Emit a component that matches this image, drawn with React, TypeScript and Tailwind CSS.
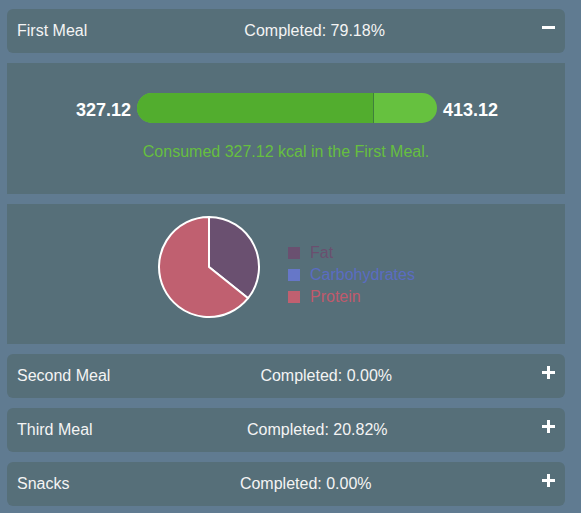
import React from "react";

const FONT = { fontFamily: '"Liberation Sans", Arial, sans-serif' };

const MEALS = [
  { name: "Second Meal", pct: "0.00" },
  { name: "Third Meal", pct: "20.82" },
  { name: "Snacks", pct: "0.00" },
];

function ToggleIcon({ open }: { open: boolean }) {
  return (
    <svg width="13" height="13" viewBox="0 0 13 13" className="-mt-2 shrink-0">
      <rect x="0" y="5" width="13" height="3" fill="#ffffff" />
      {!open && <rect x="5" y="0" width="3" height="13" fill="#ffffff" />}
    </svg>
  );
}

function MealHeader({ name, pct, open }: { name: string; pct: string; open: boolean }) {
  return (
    <div className="h-[44px] px-[10px] flex items-center justify-between rounded-md bg-[#566f79] text-[16px] text-[#f4f4f4]">
      <span>{name}</span>
      <span>Completed: {pct}%</span>
      <ToggleIcon open={open} />
    </div>
  );
}

// slice path for the pie, angles in degrees clockwise from 12 o'clock
function slice(cx: number, cy: number, r: number, a0: number, a1: number) {
  const p = (a: number) => {
    const rad = ((a - 90) * Math.PI) / 180;
    return [cx + r * Math.cos(rad), cy + r * Math.sin(rad)];
  };
  const [x0, y0] = p(a0);
  const [x1, y1] = p(a1);
  const large = a1 - a0 > 180 ? 1 : 0;
  return `M${cx},${cy} L${x0},${y0} A${r},${r} 0 ${large} 1 ${x1},${y1} Z`;
}

function Pie() {
  const fat = 128.6;
  return (
    <svg width="104" height="104" viewBox="0 0 104 104" className="shrink-0">
      <path d={slice(52, 52, 50, 0, fat)} fill="#6a5070" stroke="#ffffff" strokeWidth="2" strokeLinejoin="round" />
      <path d={slice(52, 52, 50, fat, 360)} fill="#c06070" stroke="#ffffff" strokeWidth="2" strokeLinejoin="round" />
    </svg>
  );
}

const LEGEND = [
  { label: "Fat", box: "bg-[#6a5070]", text: "text-[#6a4f6f]" },
  { label: "Carbohydrates", box: "bg-[#6677c8]", text: "text-[#5a6cc2]" },
  { label: "Protein", box: "bg-[#c06070]", text: "text-[#c05a6c]" },
];

export default function App() {
  return (
    <div className="min-h-screen bg-[#607b91] pt-[9px] pb-[8px] pl-[7px] pr-[16px]" style={FONT}>
      <div className="flex flex-col gap-[10px]">
        <MealHeader name="First Meal" pct="79.18" open />

        {/* Calories bar */}
        <div className="h-[131px] bg-[#566f79] pt-[30px] flex flex-col items-center">
          <div className="flex items-center gap-[6px] h-[30px] ml-[2px]">
            <span className="text-[18px] font-bold text-white mt-[4px]">327.12</span>
            <div className="w-[300px] h-[30px] rounded-full bg-[#66c13f] overflow-hidden flex">
              <div className="h-full w-[237px] bg-[#52ad2e] border-r border-[#3f7f3c]" />
            </div>
            <span className="text-[18px] font-bold text-white mt-[4px]">413.12</span>
          </div>
          <div className="mt-[17px] text-[16px] text-[#66bf3f]">Consumed 327.12 kcal in the First Meal.</div>
        </div>

        {/* Macros */}
        <div className="h-[140px] bg-[#566f79] pt-[11px] flex justify-center items-start">
          <div className="flex items-start gap-[27px]">
            <Pie />
            <div className="flex flex-col gap-[4px] mt-[29px]">
              {LEGEND.map((l) => (
                <div key={l.label} className="flex items-center gap-[10px] h-[18px]">
                  <span className={`w-[12px] h-[12px] ${l.box}`} />
                  <span className={`text-[16px] ${l.text}`}>{l.label}</span>
                </div>
              ))}
            </div>
          </div>
        </div>

        {MEALS.map((m) => (
          <MealHeader key={m.name} name={m.name} pct={m.pct} open={false} />
        ))}
      </div>
    </div>
  );
}
